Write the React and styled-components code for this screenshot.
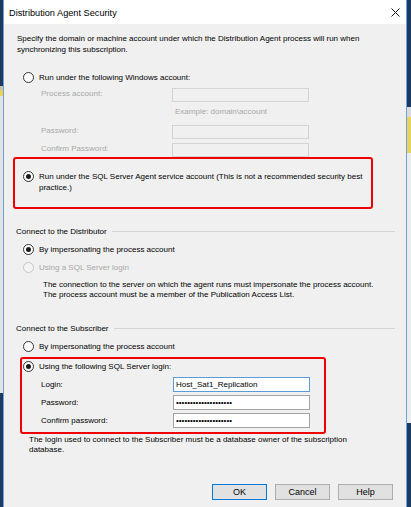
import React from "react";
import styled, { createGlobalStyle } from "styled-components";

const GlobalStyle = createGlobalStyle`
  html, body {
    margin: 0;
    padding: 0;
    height: 507px;
    overflow: hidden;
  }
  body {
    font-family: "Liberation Sans", Arial, sans-serif;
  }
`;

const FONT = `"Liberation Sans", Arial, sans-serif`;

// desktop strips visible on both sides of the dialog
const leftBg = `linear-gradient(to bottom, #1f395c 0 86px, #c9c4a8 86px 90px, #e8d25a 90px 96px, #e3e3e3 96px 393px, #1e3a5e 393px)`;
const rightBg = `linear-gradient(to bottom, #1f395c 0 107px, #dadada 107px 117px, #e9d35c 117px 153px, #ececec 153px 423px, #1e3a5e 423px)`;

const Desktop = styled.div`
  display: flex;
  height: 507px;
  overflow: hidden;
`;

const Strip = styled.div`
  flex: none;
  width: ${(p) => p.$w}px;
  background: ${(p) => p.$bg};
`;

const Window = styled.div`
  flex: none;
  width: 404px;
  box-sizing: border-box;
  border-left: 1px solid #6aa3dc;
  border-right: 1px solid #6aa3dc;
  background: #f0f0f0;
  display: flex;
  flex-direction: column;
`;

const TitleBar = styled.div`
  height: 24px;
  flex: none;
  background: #fff;
  display: flex;
  align-items: center;
  justify-content: space-between;
  padding: 1px 6px 0 5px;
  box-sizing: border-box;
`;

const Title = styled.span`
  font: 9.2px ${FONT};
  color: #000;
`;

const Body = styled.div`
  flex: 1;
  display: flex;
  flex-direction: column;
  padding: 0 11px 0 9px;
  font: 8px ${FONT};
  line-height: 11px;
  color: #000;
`;

const Description = styled.div`
  margin-top: 9px;
  padding-left: 4px;
  white-space: nowrap;
`;

const Option = styled.div`
  display: flex;
  align-items: ${(p) => (p.$top ? "flex-start" : "center")};
  gap: 5px;
  height: ${(p) => (p.$top ? "auto" : "12px")};
  margin-top: ${(p) => p.$mt || 0}px;
  padding-left: ${(p) => p.$pl ?? 10}px;
  color: ${(p) => (p.$disabled ? "#a8a8a8" : "#000")};
  white-space: nowrap;
`;

const Radio = styled.span`
  flex: none;
  box-sizing: border-box;
  width: 11px;
  height: 11px;
  border-radius: 50%;
  border: 1px solid ${(p) => (p.$disabled ? "#c6c6c6" : "#333")};
  background: ${(p) => (p.$disabled ? "#f4f4f4" : "#fff")};
  display: flex;
  align-items: center;
  justify-content: center;
  &::after {
    content: "";
    display: ${(p) => (p.$checked ? "block" : "none")};
    width: 5px;
    height: 5px;
    border-radius: 50%;
    background: #1a1a1a;
  }
`;

const FieldGrid = styled.div`
  display: grid;
  grid-template-columns: ${(p) => p.$label}px 137px;
  align-items: ${(p) => p.$align || "start"};
  padding-left: ${(p) => p.$pl}px;
  margin-top: ${(p) => p.$mt || 0}px;
  row-gap: ${(p) => p.$gap || 0}px;
`;

const FieldLabel = styled.span`
  color: ${(p) => (p.$disabled ? "#a8a8a8" : "#000")};
  margin-top: ${(p) => p.$mt || 0}px;
`;

const TextBox = styled.input`
  box-sizing: border-box;
  width: 137px;
  height: ${(p) => p.$h || 15}px;
  margin: ${(p) => p.$mt || 0}px 0 0 0;
  border: 1px solid
    ${(p) => (p.$focused ? "#5b9bd8" : p.disabled ? "#d4d4d4" : "#a3a3a3")};
  background: ${(p) => (p.disabled ? "#f0f0f0" : "#fff")};
  font: 8px ${FONT};
  color: #000;
  padding: 0 2px;
  outline: none;
`;

const Hint = styled.span`
  grid-column: 2;
  margin-top: 4px;
  padding-left: 3px;
  color: #a8a8a8;
`;

const Highlight = styled.div`
  box-sizing: border-box;
  width: ${(p) => p.$w}px;
  margin-left: ${(p) => p.$ml || 0}px;
  margin-top: ${(p) => p.$mt || 0}px;
  border: 2px solid #f00000;
  border-radius: 3px;
  padding: ${(p) => p.$pad};
`;

const GroupHeader = styled.div`
  display: flex;
  align-items: center;
  gap: 5px;
  padding-left: 3px;
  margin-top: ${(p) => p.$mt}px;
  white-space: nowrap;
  &::after {
    content: "";
    flex: 1;
    height: 1px;
    background: #d3d3d3;
  }
`;

const Note = styled.div`
  margin-top: ${(p) => p.$mt}px;
  padding-left: ${(p) => p.$pl}px;
  line-height: 10px;
  white-space: nowrap;
`;

const ButtonRow = styled.div`
  display: flex;
  justify-content: flex-end;
  gap: 8px;
  margin-top: 29px;
  padding-right: 2px;
`;

const Button = styled.button`
  box-sizing: border-box;
  width: 55px;
  height: 16px;
  padding: 0;
  border: 1px solid ${(p) => (p.$default ? "#0078d7" : "#adadad")};
  background: #e1e1e1;
  font: 9px ${FONT};
  color: #000;
`;

const CloseIcon = () => (
  <svg width="9" height="9" viewBox="0 0 9 9">
    <path d="M0.5 0.5 L8.5 8.5 M8.5 0.5 L0.5 8.5" stroke="#111" strokeWidth="1" />
  </svg>
);

const PASSWORD = "xxxxxxxxxxxxxxxxxxxx";

export default function App() {
  return (
    <>
      <GlobalStyle />
      <Desktop>
        <Strip $w={3} $bg={leftBg} />
        <Window>
          <TitleBar>
            <Title>Distribution Agent Security</Title>
            <CloseIcon />
          </TitleBar>
          <Body>
            <Description>
              Specify the domain or machine account under which the Distribution Agent process will run when
              <br />
              synchronizing this subscription.
            </Description>

            <Option $mt={16}>
              <Radio />
              Run under the following Windows account:
            </Option>
            <FieldGrid $label={131} $pl={28} $mt={5}>
              <FieldLabel $disabled>Process account:</FieldLabel>
              <TextBox disabled $h={14} />
              <Hint>Example: domain\account</Hint>
              <FieldLabel $disabled $mt={8}>Password:</FieldLabel>
              <TextBox disabled $h={14} $mt={8} />
              <FieldLabel $disabled $mt={4}>Confirm Password:</FieldLabel>
              <TextBox disabled $h={14} $mt={4} />
            </FieldGrid>

            <Highlight $w={360} $pad="12px 0 14px 8px">
              <Option $top $pl={0}>
                <Radio $checked />
                <span>
                  Run under the SQL Server Agent service account (This is not a recommended security best
                  <br />
                  practice.)
                </span>
              </Option>
            </Highlight>

            <GroupHeader $mt={17}>Connect to the Distributor</GroupHeader>
            <Option $mt={6}>
              <Radio $checked />
              By impersonating the process account
            </Option>
            <Option $mt={6} $disabled>
              <Radio $disabled />
              Using a SQL Server login
            </Option>
            <Note $mt={7} $pl={30}>
              The connection to the server on which the agent runs must impersonate the process account.
              <br />
              The process account must be a member of the Publication Access List.
            </Note>

            <GroupHeader $mt={23}>Connect to the Subscriber</GroupHeader>
            <Option $mt={6}>
              <Radio />
              By impersonating the process account
            </Option>
            <Highlight $w={306} $ml={7} $mt={5} $pad="1px 0 4px 1px">
              <Option $pl={0}>
                <Radio $checked />
                Using the following SQL Server login:
              </Option>
              <FieldGrid $label={132} $pl={18} $mt={5} $gap={3} $align="center">
                <FieldLabel>Login:</FieldLabel>
                <TextBox $focused readOnly defaultValue="Host_Sat1_Replication" />
                <FieldLabel>Password:</FieldLabel>
                <TextBox type="password" readOnly defaultValue={PASSWORD} />
                <FieldLabel>Confirm password:</FieldLabel>
                <TextBox type="password" readOnly defaultValue={PASSWORD} />
              </FieldGrid>
            </Highlight>
            <Note $mt={1} $pl={16}>
              The login used to connect to the Subscriber must be a database owner of the subscription
              <br />
              database.
            </Note>

            <ButtonRow>
              <Button $default>OK</Button>
              <Button>Cancel</Button>
              <Button>Help</Button>
            </ButtonRow>
          </Body>
        </Window>
        <Strip $w={4} $bg={rightBg} />
      </Desktop>
    </>
  );
}
